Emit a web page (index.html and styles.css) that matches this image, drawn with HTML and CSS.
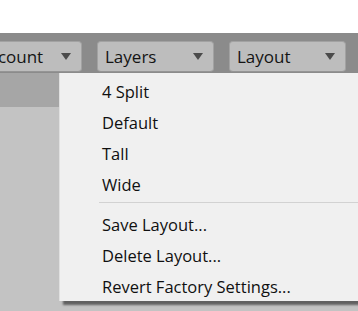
FILE: index.html
```html
<!DOCTYPE html>
<html lang="en">
<head>
    <meta charset="UTF-8">
    <title>Layout Menu</title>
    <link rel="stylesheet" href="styles.css">
</head>
<body>
    <div class="top-space"></div>
    <div class="toolbar">
        <div class="drop account"><span>Account</span><i class="caret"></i></div>
        <div class="drop"><span>Layers</span><i class="caret"></i></div>
        <div class="drop"><span>Layout</span><i class="caret"></i></div>
    </div>
    <div class="workspace">
        <div class="tab-strip"></div>
        <div class="menu">
            <div class="item">4 Split</div>
            <div class="item">Default</div>
            <div class="item">Tall</div>
            <div class="item">Wide</div>
            <div class="separator"></div>
            <div class="item">Save Layout...</div>
            <div class="item">Delete Layout...</div>
            <div class="item">Revert Factory Settings...</div>
        </div>
    </div>
</body>
</html>
```

FILE: styles.css
```css
body {
    margin: 0;
    font-family: "Open Sans", "Noto Sans", sans-serif;
    background-color: #ffffff;
    overflow: hidden;
}
.top-space {
    height: 33px;
    background-color: #ffffff;
}
.toolbar {
    display: flex;
    gap: 15px;
    height: 40px;
    padding-top: 8px;
    box-sizing: border-box;
    background-color: #8b8b8b;
    overflow: hidden;
}
.drop {
    flex: none;
    width: 117px;
    height: 31px;
    box-sizing: border-box;
    display: flex;
    align-items: center;
    justify-content: space-between;
    padding: 0 10px 0 7px;
    background-color: #bdbdbd;
    border: 1px solid #a2a2a2;
    border-bottom-color: #959595;
    border-radius: 4px;
    font-size: 17px;
    color: #141414;
}
.account {
    width: 111px;
    margin-left: -29px;
}
.caret {
    width: 0;
    height: 0;
    border-left: 5px solid transparent;
    border-right: 5px solid transparent;
    border-top: 7px solid #4b4b4b;
}
.workspace {
    position: relative;
    height: 238px;
    background-color: #c3c3c3;
}
.tab-strip {
    height: 34px;
    background-color: #a6a6a6;
}
.menu {
    position: absolute;
    top: 0;
    left: 59px;
    width: 310px;
    padding: 3px 0 0 0;
    height: 228px;
    box-sizing: border-box;
    background-color: #f0f0f0;
    border-left: 1px solid #e0e0e0;
    box-shadow: 4px 4px 2px rgba(0, 0, 0, 0.5);
}
.item {
    height: 31px;
    line-height: 31px;
    padding-left: 42px;
    font-size: 16.5px;
    color: #101010;
    white-space: nowrap;
}
.separator {
    height: 1px;
    margin: 2px 0 6px 39px;
    background-color: #d2d2d2;
}
```
